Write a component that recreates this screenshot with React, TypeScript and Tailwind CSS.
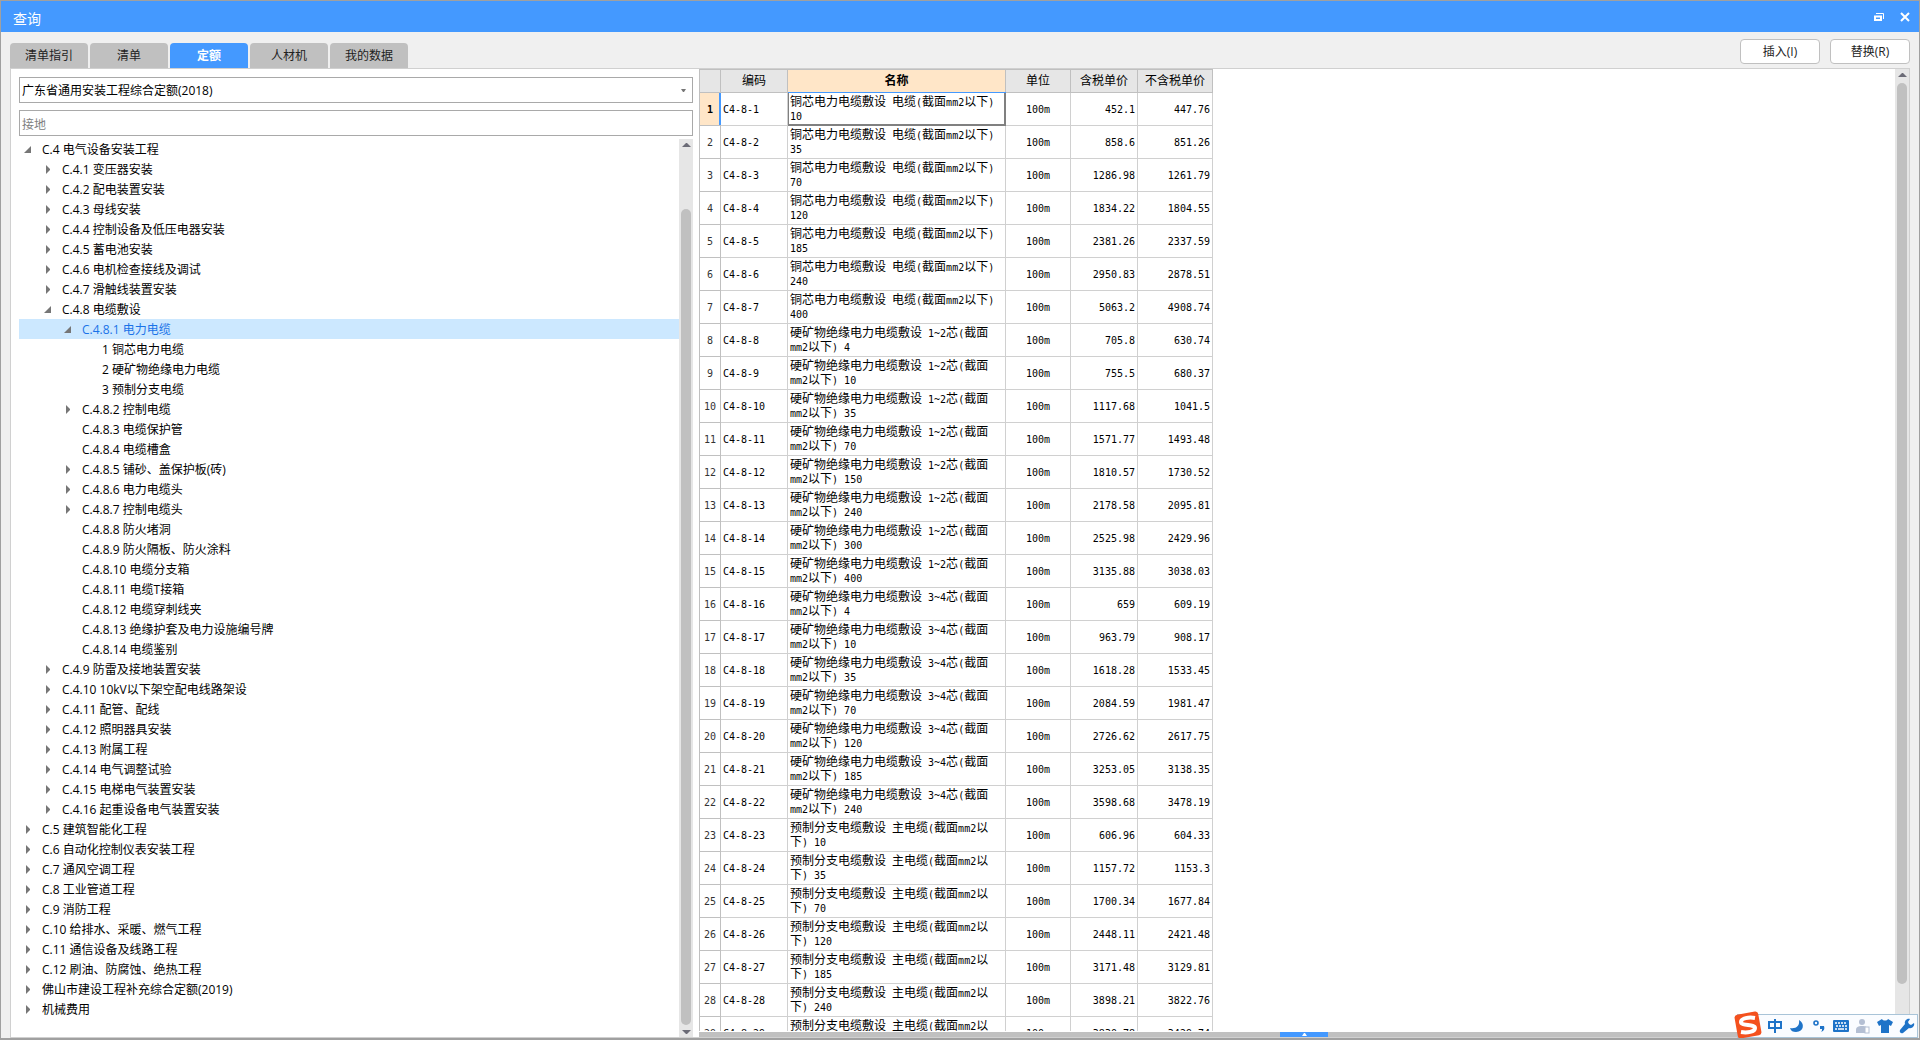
import { ReactNode } from 'react';
import { clsx } from 'clsx';

type Arrow = 'open' | 'closed' | 'none';

interface TreeItem {
  level: number;
  label: string;
  arrow: Arrow;
  selected?: boolean;
}

interface QuotaRow {
  code: string;
  name: [string, string];
  taxed: string;
  untaxed: string;
}

const tabs = ['清单指引', '清单', '定额', '人材机', '我的数据'];

const node = (level: number, label: string, arrow: Arrow = 'closed', selected = false): TreeItem => ({
  level,
  label,
  arrow,
  selected
});

const treeItems: TreeItem[] = [
  node(0, 'C.4 电气设备安装工程', 'open'),
  node(1, 'C.4.1 变压器安装'),
  node(1, 'C.4.2 配电装置安装'),
  node(1, 'C.4.3 母线安装'),
  node(1, 'C.4.4 控制设备及低压电器安装'),
  node(1, 'C.4.5 蓄电池安装'),
  node(1, 'C.4.6 电机检查接线及调试'),
  node(1, 'C.4.7 滑触线装置安装'),
  node(1, 'C.4.8 电缆敷设', 'open'),
  node(2, 'C.4.8.1 电力电缆', 'open', true),
  node(3, '1 铜芯电力电缆', 'none'),
  node(3, '2 硬矿物绝缘电力电缆', 'none'),
  node(3, '3 预制分支电缆', 'none'),
  node(2, 'C.4.8.2 控制电缆'),
  node(2, 'C.4.8.3 电缆保护管', 'none'),
  node(2, 'C.4.8.4 电缆槽盒', 'none'),
  node(2, 'C.4.8.5 铺砂、盖保护板(砖)'),
  node(2, 'C.4.8.6 电力电缆头'),
  node(2, 'C.4.8.7 控制电缆头'),
  node(2, 'C.4.8.8 防火堵洞', 'none'),
  node(2, 'C.4.8.9 防火隔板、防火涂料', 'none'),
  node(2, 'C.4.8.10 电缆分支箱', 'none'),
  node(2, 'C.4.8.11 电缆T接箱', 'none'),
  node(2, 'C.4.8.12 电缆穿刺线夹', 'none'),
  node(2, 'C.4.8.13 绝缘护套及电力设施编号牌', 'none'),
  node(2, 'C.4.8.14 电缆鉴别', 'none'),
  node(1, 'C.4.9 防雷及接地装置安装'),
  node(1, 'C.4.10 10kV以下架空配电线路架设'),
  node(1, 'C.4.11 配管、配线'),
  node(1, 'C.4.12 照明器具安装'),
  node(1, 'C.4.13 附属工程'),
  node(1, 'C.4.14 电气调整试验'),
  node(1, 'C.4.15 电梯电气装置安装'),
  node(1, 'C.4.16 起重设备电气装置安装'),
  node(0, 'C.5 建筑智能化工程'),
  node(0, 'C.6 自动化控制仪表安装工程'),
  node(0, 'C.7 通风空调工程'),
  node(0, 'C.8 工业管道工程'),
  node(0, 'C.9 消防工程'),
  node(0, 'C.10 给排水、采暖、燃气工程'),
  node(0, 'C.11 通信设备及线路工程'),
  node(0, 'C.12 刷油、防腐蚀、绝热工程'),
  node(0, '佛山市建设工程补充综合定额(2019)'),
  node(0, '机械费用')
];

const copper = (size: string): [string, string] => ['铜芯电力电缆敷设 电缆(截面mm2以下)', size];
const mineral = (cores: string, size: string): [string, string] => [
  `硬矿物绝缘电力电缆敷设 ${cores}芯(截面`,
  `mm2以下) ${size}`
];
const branch = (size: string): [string, string] => ['预制分支电缆敷设 主电缆(截面mm2以', `下) ${size}`];

const rows: QuotaRow[] = [
  { code: 'C4-8-1', name: copper('10'), taxed: '452.1', untaxed: '447.76' },
  { code: 'C4-8-2', name: copper('35'), taxed: '858.6', untaxed: '851.26' },
  { code: 'C4-8-3', name: copper('70'), taxed: '1286.98', untaxed: '1261.79' },
  { code: 'C4-8-4', name: copper('120'), taxed: '1834.22', untaxed: '1804.55' },
  { code: 'C4-8-5', name: copper('185'), taxed: '2381.26', untaxed: '2337.59' },
  { code: 'C4-8-6', name: copper('240'), taxed: '2950.83', untaxed: '2878.51' },
  { code: 'C4-8-7', name: copper('400'), taxed: '5063.2', untaxed: '4908.74' },
  { code: 'C4-8-8', name: mineral('1~2', '4'), taxed: '705.8', untaxed: '630.74' },
  { code: 'C4-8-9', name: mineral('1~2', '10'), taxed: '755.5', untaxed: '680.37' },
  { code: 'C4-8-10', name: mineral('1~2', '35'), taxed: '1117.68', untaxed: '1041.5' },
  { code: 'C4-8-11', name: mineral('1~2', '70'), taxed: '1571.77', untaxed: '1493.48' },
  { code: 'C4-8-12', name: mineral('1~2', '150'), taxed: '1810.57', untaxed: '1730.52' },
  { code: 'C4-8-13', name: mineral('1~2', '240'), taxed: '2178.58', untaxed: '2095.81' },
  { code: 'C4-8-14', name: mineral('1~2', '300'), taxed: '2525.98', untaxed: '2429.96' },
  { code: 'C4-8-15', name: mineral('1~2', '400'), taxed: '3135.88', untaxed: '3038.03' },
  { code: 'C4-8-16', name: mineral('3~4', '4'), taxed: '659', untaxed: '609.19' },
  { code: 'C4-8-17', name: mineral('3~4', '10'), taxed: '963.79', untaxed: '908.17' },
  { code: 'C4-8-18', name: mineral('3~4', '35'), taxed: '1618.28', untaxed: '1533.45' },
  { code: 'C4-8-19', name: mineral('3~4', '70'), taxed: '2084.59', untaxed: '1981.47' },
  { code: 'C4-8-20', name: mineral('3~4', '120'), taxed: '2726.62', untaxed: '2617.75' },
  { code: 'C4-8-21', name: mineral('3~4', '185'), taxed: '3253.05', untaxed: '3138.35' },
  { code: 'C4-8-22', name: mineral('3~4', '240'), taxed: '3598.68', untaxed: '3478.19' },
  { code: 'C4-8-23', name: branch('10'), taxed: '606.96', untaxed: '604.33' },
  { code: 'C4-8-24', name: branch('35'), taxed: '1157.72', untaxed: '1153.3' },
  { code: 'C4-8-25', name: branch('70'), taxed: '1700.34', untaxed: '1677.84' },
  { code: 'C4-8-26', name: branch('120'), taxed: '2448.11', untaxed: '2421.48' },
  { code: 'C4-8-27', name: branch('185'), taxed: '3171.48', untaxed: '3129.81' },
  { code: 'C4-8-28', name: branch('240'), taxed: '3898.21', untaxed: '3822.76' },
  { code: 'C4-8-29', name: branch('400'), taxed: '3830.78', untaxed: '3429.74' }
];

const monoFont = "font-['DejaVu_Sans_Mono','Liberation_Mono',monospace]";

// Latin runs are set in a half-width face so they line up with the CJK grid
function GridText({ text }: { text: string }) {
  return (
    <>
      {text.split(/([\x20-\x7e]+)/).map((part, i) =>
        i % 2 === 1 ? (
          <span key={i} className={clsx('whitespace-pre text-[10px] leading-none', monoFont)}>
            {part}
          </span>
        ) : (
          part
        )
      )}
    </>
  );
}

function TreeArrow({ arrow }: { arrow: Arrow }) {
  return (
    <svg className="mr-2 h-3 w-3 shrink-0 fill-[#767676]" viewBox="0 0 12 12" aria-hidden="true">
      {arrow === 'open' && <path d="M9 2v7H2z" />}
      {arrow === 'closed' && <path d="M4 1l4 4v1l-4 4z" />}
    </svg>
  );
}

const indents = ['pl-[3px]', 'pl-[23px]', 'pl-[43px]', 'pl-[63px]'];

function TreeRow({ item }: { item: TreeItem }) {
  return (
    <li
      role="treeitem"
      aria-selected={item.selected}
      className={clsx(
        'flex h-5 items-center pt-[2px] whitespace-nowrap',
        indents[item.level],
        item.selected && 'bg-[#cce8ff] text-[#1a73e8]'
      )}
    >
      <TreeArrow arrow={item.arrow} />
      <span>{item.label}</span>
    </li>
  );
}

function VScrollbar({ thumb }: { thumb: ReactNode }) {
  return (
    <div className="flex w-[14px] shrink-0 flex-col items-center bg-[#e6e6e6]">
      <svg className="h-[14px] w-[13px] shrink-0 fill-[#6b6b76]" viewBox="0 0 13 14" aria-hidden="true">
        <path d="M2 8l4-4h1l4 4z" />
      </svg>
      <div className="flex w-full flex-1 flex-col items-center">{thumb}</div>
      <svg className="h-3 w-[13px] shrink-0 fill-[#6b6b76]" viewBox="0 0 13 12" aria-hidden="true">
        <path d="M2 5l4 4h1l4-4z" />
      </svg>
    </div>
  );
}

function QuotaTable() {
  const head = 'border border-[#c0c0c0] p-0 font-normal';
  const cell = 'border border-[#d0d0d0] px-[2px] py-0';
  return (
    <table className="w-[514px] table-fixed border-collapse text-[12px] leading-[14px] text-black">
      <colgroup>
        <col className="w-[21px]" />
        <col className="w-[67px]" />
        <col className="w-[218px]" />
        <col className="w-[65px]" />
        <col className="w-[67px]" />
        <col className="w-[75px]" />
      </colgroup>
      <thead>
        <tr className="h-[23px] bg-[#e6e6e6]">
          <th className={head} aria-label="序号"></th>
          <th className={head}>编码</th>
          <th className="border border-[#c0c0c0] border-b-[#4499ff] bg-[#ffe6c8] p-0 font-bold">名称</th>
          <th className={head}>单位</th>
          <th className={head}>含税单价</th>
          <th className={head}>不含税单价</th>
        </tr>
      </thead>
      <tbody>
        {rows.map((row, i) => (
          <tr key={row.code} className="h-[33px]">
            <th
              scope="row"
              className={clsx(
                'border border-[#c0c0c0] p-0 pt-[2px] text-[10px]',
                monoFont,
                i === 0
                  ? 'border-r-[#4499ff] bg-[#ffe6c8] font-bold shadow-[inset_-1px_0_0_#4499ff]'
                  : 'font-normal text-[#333333]'
              )}
            >
              {i + 1}
            </th>
            <td className={cell}>
              <GridText text={row.code} />
            </td>
            <td
              className={clsx(
                'border px-[2px] py-0 whitespace-nowrap',
                i === 0
                  ? 'border-[#808080] shadow-[inset_-1px_-1px_0_#808080,inset_1px_0_0_#808080]'
                  : 'border-[#d0d0d0]'
              )}
            >
              <GridText text={row.name[0]} />
              <br />
              <GridText text={row.name[1]} />
            </td>
            <td className={clsx(cell, 'text-center')}>
              <GridText text="100m" />
            </td>
            <td className={clsx(cell, 'text-right')}>
              <GridText text={row.taxed} />
            </td>
            <td className={clsx(cell, 'text-right')}>
              <GridText text={row.untaxed} />
            </td>
          </tr>
        ))}
      </tbody>
    </table>
  );
}

function ImeBar() {
  return (
    <div className="absolute right-px bottom-0 flex h-6 items-center border border-[#a9c4d8] bg-[#fafcff] pr-[2px] pl-[29px]">
      <svg className="absolute -top-1 -left-1 h-7 w-7" viewBox="0 0 28 28" aria-hidden="true">
        <rect x="2" y="2" width="24" height="24" rx="3" fill="#f4511e" transform="rotate(-10 14 14)" />
        <path
          d="M21 7C15 6 7 7 7 11c0 4 14 2 14 6 0 4-8 5-14 4"
          fill="none"
          stroke="#fff"
          strokeWidth="4"
        />
      </svg>
      <div className="flex items-center gap-[6px] text-[#1e73c8]">
        <svg className="h-4 w-4" viewBox="0 0 16 16" fill="none" stroke="currentColor" strokeWidth="2" aria-label="中文">
          <path d="M2 4h12v6H2zM8 1v14" />
        </svg>
        <svg className="h-4 w-4" viewBox="0 0 16 16" fill="currentColor" aria-hidden="true">
          <path d="M10 2c6 3 5 12-3 12-3 0-5-1-6-4 6 1 10-2 9-8z" />
        </svg>
        <svg className="h-4 w-4" viewBox="0 0 16 16" fill="currentColor" aria-hidden="true">
          <circle cx="5" cy="5" r="2" fill="none" stroke="currentColor" strokeWidth="1.6" />
          <path d="M9 8h4c1 3 0 5-3 6 1-1 1-2 1-3H9z" />
        </svg>
        <svg className="h-4 w-4" viewBox="0 0 16 16" aria-hidden="true">
          <rect x="0" y="2" width="16" height="12" rx="1" fill="currentColor" />
          <path d="M2 5h12M3 8h11" stroke="#fff" strokeWidth="1.6" strokeDasharray="2 1" />
          <path d="M2 11h2M5 11h6M12 11h2" stroke="#fff" strokeWidth="1.6" />
        </svg>
        <svg className="h-4 w-4" viewBox="0 0 16 16" fill="#b4bfd3" aria-hidden="true">
          <circle cx="7" cy="4" r="3" />
          <path d="M1 15v-3c0-3 2-4 6-4s6 1 6 4v3z" />
          <rect x="10" y="9" width="4" height="6" fill="#fff" stroke="#b4bfd3" />
        </svg>
        <svg className="h-4 w-4" viewBox="0 0 16 16" fill="currentColor" aria-hidden="true">
          <path d="M5 1c1 2 5 2 6 0l5 3-2 4-2-1v8H4V7L2 8 0 4z" />
        </svg>
        <svg className="h-4 w-4" viewBox="0 0 16 16" fill="currentColor" aria-hidden="true">
          <path d="M15 5l-3 2-2-1-1-2 2-3C8 0 5 3 6 6l-5 6c-1 2 1 4 3 3l6-5c3 1 6-2 5-5z" />
        </svg>
      </div>
    </div>
  );
}

export default function App() {
  return (
    <div className="relative flex h-screen flex-col overflow-hidden border border-b-2 border-[#a0a0a0] bg-[#f0f0f0] font-['Open_Sans','Noto_Sans_CJK_SC',sans-serif] text-[12px] leading-4 text-black">
      <header className="flex h-[31px] shrink-0 items-center bg-[#4499ff] px-3 text-white">
        <h1 className="flex-1 pt-1 text-[14px]">查询</h1>
        <button type="button" aria-label="还原" className="mr-4">
          <svg className="h-[10px] w-[10px]" viewBox="0 0 10 10" fill="none" stroke="currentColor" aria-hidden="true">
            <path d="M2 1.5h7.5V7" />
            <path d="M1 4.5h6V8H1z" strokeWidth="2" />
          </svg>
        </button>
        <button type="button" aria-label="关闭" className="-mr-[3px]">
          <svg className="h-[10px] w-[10px]" viewBox="0 0 10 10" fill="none" stroke="currentColor" strokeWidth="2" aria-hidden="true">
            <path d="M1 1l8 8M9 1L1 9" />
          </svg>
        </button>
      </header>

      <div className="flex h-9 shrink-0 items-end justify-between px-[9px]">
        <nav className="flex gap-[2px]">
          {tabs.map(tab => (
            <button
              key={tab}
              type="button"
              className={clsx(
                'h-[25px] w-[78px] rounded-t-sm',
                tab === '定额' ? 'bg-[#4499ff] font-bold text-white' : 'bg-[#c0c0c0] text-[#222222]'
              )}
            >
              {tab}
            </button>
          ))}
        </nav>
        <div className="flex gap-[10px] self-start pt-[7px]">
          <button type="button" className="h-[25px] w-20 rounded-sm border border-[#c0c0c0] bg-white text-[#222222]">
            插入(I)
          </button>
          <button type="button" className="h-[25px] w-20 rounded-sm border border-[#c0c0c0] bg-white text-[#222222]">
            替换(R)
          </button>
        </div>
      </div>

      <main className="mx-[9px] flex min-h-0 flex-1 border border-[#d0d0d0] bg-white">
        {/* Quota book tree */}
        <section className="flex w-[688px] shrink-0 flex-col pt-2 pr-[6px] pl-2">
          <div className="relative">
            <select
              aria-label="定额库"
              className="h-[26px] w-full appearance-none border border-[#a9a9a9] bg-white px-[2px] pt-[2px]"
            >
              <option>广东省通用安装工程综合定额(2018)</option>
            </select>
            <svg className="pointer-events-none absolute top-3 right-[7px] h-[3px] w-[5px] fill-[#767676]" viewBox="0 0 5 3" aria-hidden="true">
              <path d="M0 0h5L3 3H2z" />
            </svg>
          </div>
          <input
            type="text"
            aria-label="搜索"
            placeholder="接地"
            className="mt-[7px] h-[26px] shrink-0 border border-[#a9a9a9] px-[2px] pt-[2px] placeholder:text-[#808080]"
          />
          <div className="mt-[3px] flex min-h-0 flex-1">
            <ul role="tree" className="flex-1 overflow-hidden">
              {treeItems.map(item => (
                <TreeRow key={item.label} item={item} />
              ))}
            </ul>
            <VScrollbar thumb={<div className="mt-[56px] w-[10px] flex-1 rounded-full bg-[#c0c0c0]" />} />
          </div>
        </section>

        {/* Quota grid */}
        <section className="flex min-w-0 flex-1 flex-col">
          <div className="flex min-h-0 flex-1">
            <div className="mb-px flex-1 overflow-hidden">
              <QuotaTable />
            </div>
            <VScrollbar thumb={<div className="mb-9 w-[10px] flex-1 rounded-full bg-[#c0c0c0]" />} />
          </div>
          <div className="flex h-[5px] shrink-0 justify-center bg-[#c0c0c0]">
            <button type="button" aria-label="展开" className="flex w-12 items-center justify-center bg-[#4499ff]">
              <svg className="h-[3px] w-[5px] fill-white" viewBox="0 0 5 3" aria-hidden="true">
                <path d="M0 3h5L3 0H2z" />
              </svg>
            </button>
          </div>
        </section>
      </main>

      <ImeBar />
    </div>
  );
}
